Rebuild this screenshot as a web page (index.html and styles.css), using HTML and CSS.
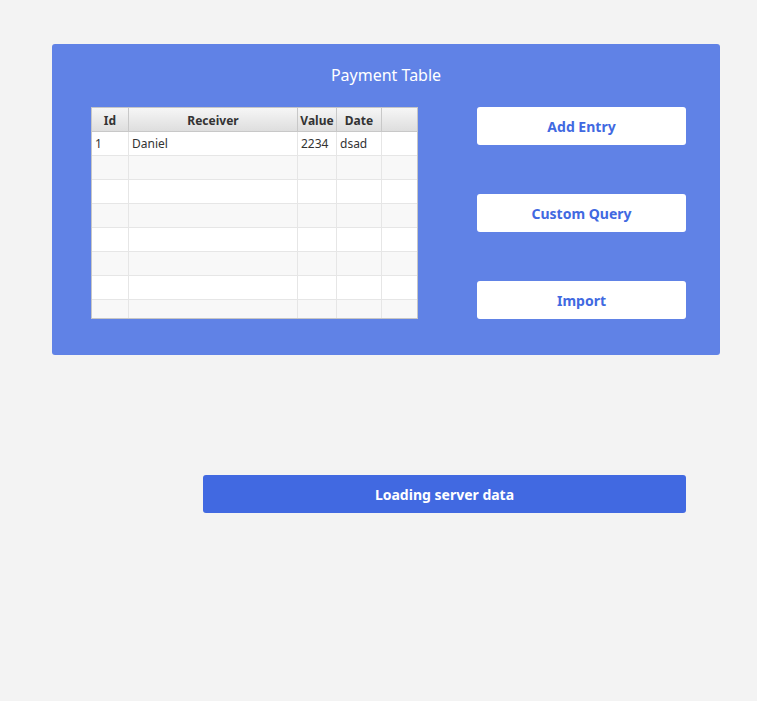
FILE: index.html
```html
<!DOCTYPE html>
<html>
<head>
<meta charset="utf-8">
<link rel="stylesheet" href="styles.css">
</head>
<body>
<div class="page">
  <section class="panel">
    <h1 class="title">Payment Table</h1>
    <div class="content">
      <div class="table">
        <div class="row head">
          <div class="cell">Id</div>
          <div class="cell">Receiver</div>
          <div class="cell">Value</div>
          <div class="cell">Date</div>
          <div class="cell last"></div>
        </div>
        <div class="row">
          <div class="cell">1</div>
          <div class="cell">Daniel</div>
          <div class="cell">2234</div>
          <div class="cell">dsad</div>
          <div class="cell last"></div>
        </div>
        <div class="row alt"><div class="cell"></div><div class="cell"></div><div class="cell"></div><div class="cell"></div><div class="cell last"></div></div>
        <div class="row"><div class="cell"></div><div class="cell"></div><div class="cell"></div><div class="cell"></div><div class="cell last"></div></div>
        <div class="row alt"><div class="cell"></div><div class="cell"></div><div class="cell"></div><div class="cell"></div><div class="cell last"></div></div>
        <div class="row"><div class="cell"></div><div class="cell"></div><div class="cell"></div><div class="cell"></div><div class="cell last"></div></div>
        <div class="row alt"><div class="cell"></div><div class="cell"></div><div class="cell"></div><div class="cell"></div><div class="cell last"></div></div>
        <div class="row"><div class="cell"></div><div class="cell"></div><div class="cell"></div><div class="cell"></div><div class="cell last"></div></div>
        <div class="row alt"><div class="cell"></div><div class="cell"></div><div class="cell"></div><div class="cell"></div><div class="cell last"></div></div>
      </div>
      <div class="actions">
        <button class="btn">Add Entry</button>
        <button class="btn">Custom Query</button>
        <button class="btn">Import</button>
      </div>
    </div>
  </section>
  <div class="status-row">
    <button class="loading">Loading server data</button>
  </div>
</div>
</body>
</html>
```
FILE: styles.css
```css
html, body {
  margin: 0;
  padding: 0;
  background: #f3f3f3;
  font-family: "Noto Sans", "Open Sans", sans-serif;
}
.page {
  width: 757px;
  height: 701px;
  padding-top: 44px;
  box-sizing: border-box;
}
.panel {
  margin-left: 52px;
  width: 668px;
  height: 311px;
  box-sizing: border-box;
  background: #6082e6;
  border-radius: 3px;
  padding: 0 34px 36px 39px;
}
.title {
  margin: 0 0 0 -5px;
  height: 63px;
  padding-top: 20px;
  box-sizing: border-box;
  text-align: center;
  color: #ffffff;
  font-weight: 400;
  font-size: 16px;
  line-height: 22px;
}
.content {
  display: flex;
  gap: 59px;
}
.table {
  width: 327px;
  height: 212px;
  box-sizing: border-box;
  border: 1px solid #c6c6c6;
  background: #ffffff;
  overflow: hidden;
}
.row {
  display: grid;
  grid-template-columns: 37px 169px 39px 45px 35px;
  height: 24px;
  border-bottom: 1px solid #e6e6e6;
  box-sizing: border-box;
  background: #ffffff;
}
.row.alt {
  background: #f8f8f8;
}
.row.head {
  height: 24px;
  background: linear-gradient(#f6f6f6, #dedede);
  border-bottom: 1px solid #c8c8c8;
}
.cell {
  border-right: 1px solid #e6e6e6;
  font-size: 12px;
  line-height: 23px;
  color: #333333;
  padding-left: 3px;
  white-space: nowrap;
  overflow: hidden;
}
.cell.last {
  border-right: none;
}
.head .cell {
  border-right-color: #c8c8c8;
  font-weight: 700;
  text-align: center;
  padding-left: 0;
  line-height: 25px;
  color: #333333;
}
.head .cell.last { border-right: none; }
.actions {
  width: 209px;
  height: 212px;
  display: flex;
  flex-direction: column;
  justify-content: space-between;
}
.btn {
  height: 38px;
  border: none;
  border-radius: 3px;
  background: #ffffff;
  color: #4169e1;
  font-family: "Noto Sans", "Open Sans", sans-serif;
  font-weight: 700;
  font-size: 14px;
  padding: 0;
  cursor: pointer;
}
.status-row {
  margin-top: 120px;
  padding-left: 203px;
}
.loading {
  width: 483px;
  height: 38px;
  border: none;
  border-radius: 3px;
  background: #4169e1;
  color: #ffffff;
  font-family: "Noto Sans", "Open Sans", sans-serif;
  font-weight: 700;
  font-size: 14px;
  padding: 0;
}
```
